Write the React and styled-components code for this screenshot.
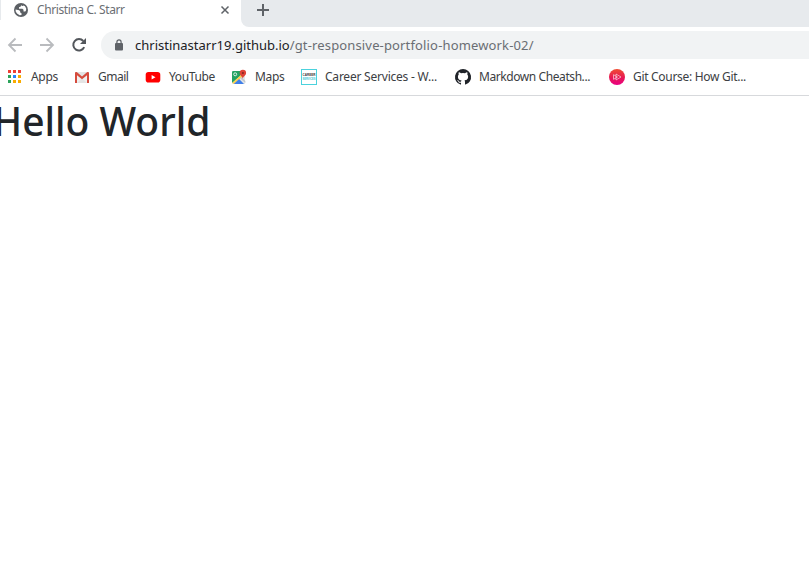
import React from "react";
import styled, { createGlobalStyle } from "styled-components";

const GlobalStyle = createGlobalStyle`
  * { box-sizing: border-box; }
  body { margin: 0; background: #fff; overflow: hidden; font-family: "Noto Sans", "Open Sans", sans-serif; }
  svg { display: block; flex: none; overflow: visible; }
`;
const Browser = styled.div`
  height: 571px;
  background: #fff;
  overflow: hidden;
`;
const TabStrip = styled.header`
  display: flex;
  height: 27px;
  background: #fff;
`;
const Tab = styled.div`
  display: flex;
  align-items: center;
  width: 241px;
  height: 20px;
  padding-left: 13px;
  border-left: 1px solid #e7eaed;
`;
const TabTitle = styled.span`
  width: 184px;
  margin-left: 9px;
  font-size: 12px;
  line-height: 20px;
  letter-spacing: ${(p) => p.$spacing}px;
  color: #6b6f74;
  white-space: nowrap;
`;
const StripRest = styled.div`
  flex: 1;
  padding: 4px 0 0 16px;
  background: #e7eaed;
  border-bottom-left-radius: 8px;
`;
const Toolbar = styled.nav`
  display: flex;
  align-items: center;
  height: 36px;
  padding-left: 7px;
`;
const NavIcon = styled.span`
  width: ${(p) => p.$width}px;
`;
const AddressBar = styled.div`
  display: flex;
  align-items: center;
  flex: 1;
  height: 28px;
  padding-left: 14px;
  background: #f1f3f4;
  border-radius: 14px 0 0 14px;
`;
const Url = styled.span`
  margin-left: 12px;
  font-size: 13px;
  line-height: 28px;
  color: #6a6e73;
  white-space: nowrap;
`;
const Host = styled.span`
  color: #202124;
`;
const Path = styled.span`
  letter-spacing: 0.15px;
`;
const Bookmarks = styled.nav`
  display: flex;
  align-items: center;
  height: 33px;
  padding: 0 0 5px 7px;
  border-bottom: 1px solid #d7d9dc;
`;
const Bookmark = styled.span`
  display: flex;
  align-items: center;
  flex: none;
  width: ${(p) => p.$width}px;
  gap: 8px;
`;
const Label = styled.span`
  font-size: 12px;
  line-height: 18px;
  letter-spacing: ${(p) => p.$spacing}px;
  color: #3c4043;
  white-space: nowrap;
`;
const Heading = styled.h1`
  margin: 1px 0 0 -7px;
  font-size: 39px;
  font-weight: 500;
  line-height: 48px;
  letter-spacing: -0.02px;
  color: #212529;
  white-space: nowrap;
`;

const Globe = () => (
  <svg width="14" height="14" viewBox="0 0 14 14">
    <circle cx="7" cy="7" r="7" fill="#5b5f64" />
    <path d="M7.2 1.7 6.8 3.5 5 4.2v1.5h3.4l1.1 1v1.7h1.8l.8-1.2.1-1.8-1.2-2.1-1.4-.9-.8.7-1.3-.3zM1.6 6.5 5.2 7.2l1 1.2v1.1l1.3.7v1.7l-1.8.3L3 10.5 1.7 8.6z" fill="#fff" />
  </svg>
);
const Stroke = ({ size, width = 1.7, color = "#5f6368", d }) => (
  <svg width={size} height={size} viewBox={`0 0 ${size} ${size}`} fill="none" stroke={color} strokeWidth={width}><path d={d} /></svg>
);
const Reload = () => (
  <svg width="16" height="16" viewBox="0 0 16 16">
    <path d="M13.2 10.1A5.7 5.7 0 1 1 12.3 4" fill="none" stroke="#53575c" strokeWidth="2" />
    <path d="M15 1v6H9z" fill="#53575c" />
  </svg>
);
const Lock = () => (
  <svg width="8" height="12" viewBox="0 0 8 12">
    <rect y="4" width="8" height="7.5" rx="1" fill="#5f6368" />
    <path d="M1.9 4.5V3a2.1 2.1 0 0 1 4.2 0v1.5" fill="none" stroke="#5f6368" strokeWidth="1.2" />
  </svg>
);
const AppsIcon = () => (
  <svg width="16" height="16" viewBox="0 0 16 16">
    <path d="M1 1h3v3H1zM6 1h3v3H6zM11 1h3v3h-3z" fill="#ee4035" />
    <path d="M1 6h3v3H1zM1 11h3v3H1z" fill="#2ba35a" />
    <path d="M6 6h3v3H6z" fill="#2684fc" />
    <path d="M11 6h3v3h-3zM6 11h3v3H6zM11 11h3v3h-3z" fill="#f9ab00" />
  </svg>
);
const Gmail = () => (
  <svg width="16" height="16" viewBox="0 0 16 16">
    <path d="M1.5 3h13v11h-13z" fill="#e4e4e4" />
    <path d="m3 4 5 4.2L13 4v10L8 9.2 3 14z" fill="#f0f0f0" />
    <path d="M1 14V4.2C1 3 2.1 2.6 3 3.3L8 7.4l5-4.1c.9-.7 2-.3 2 .9V14h-2V6.2L8 10.3 3 6.2V14z" fill="#d54b3d" />
  </svg>
);
const YouTube = () => (
  <svg width="16" height="16" viewBox="0 0 16 16">
    <rect x=".7" y="3" width="14.6" height="10.5" rx="2.8" fill="#f00" />
    <path d="M6.6 5.9v4.6l3.9-2.3z" fill="#fff" />
  </svg>
);
const Maps = () => (
  <svg width="16" height="16" viewBox="0 0 16 16">
    <path d="M2.3 2H14v13H2.3Q1 15 1 13.7V3.3Q1 2 2.3 2z" fill="#e4e6e7" />
    <path d="M2.3 2H10L9.5 6.7 1 14V3.3Q1 2 2.3 2z" fill="#23a262" />
    <path d="M1.2 14 11 5.1l1.4 1.4L3 15z" fill="#ffd04b" />
    <path d="m2.8 15 5.3-5L13 15z" fill="#3f7fe8" />
    <path d="m9.2 9.2 1.2-1.1 4 4V14z" fill="#c3c8cc" />
    <circle cx="4.2" cy="5.3" r="1.5" fill="none" stroke="#fff" strokeWidth=".8" />
    <path d="M11.8 9.8C11.6 7.5 8.7 6.5 8.7 4a3.2 3.2 0 0 1 6.4 0c0 2.5-3 3.5-3.3 5.8z" fill="#df4337" />
    <circle cx="11.9" cy="4" r="1.1" fill="#8a2823" />
  </svg>
);
const LogoText = styled.text`
  font: 700 4px "Liberation Sans", sans-serif;
`;
const Career = () => (
  <svg width="16" height="16" viewBox="0 0 16 16">
    <rect x=".5" y=".5" width="15" height="15" fill="#fff" stroke="#4bd2dd" />
    <LogoText x="1.6" y="7" textLength="12.8" lengthAdjust="spacingAndGlyphs" fill="#333">CAREER</LogoText>
    <LogoText x="1.6" y="10.8" textLength="12.8" lengthAdjust="spacingAndGlyphs" fill="#37c5d2">SERVICES</LogoText>
  </svg>
);
const Github = () => (
  <svg width="16" height="16" viewBox="0 0 16 16" fill="#202329">
    <path d="M8 0a8 8 0 0 0-2.53 15.59c.4.07.55-.17.55-.38v-1.49c-2.23.48-2.69-.94-2.69-.94-.36-.92-.89-1.17-.89-1.17-.73-.5.05-.49.05-.49.81.06 1.23.83 1.23.83.71 1.23 1.87.87 2.33.67.07-.52.28-.87.51-1.07-1.78-.2-3.64-.89-3.64-3.95 0-.87.31-1.59.82-2.15-.08-.2-.36-1.02.08-2.12 0 0 .67-.21 2.2.82a7.6 7.6 0 0 1 4 0c1.53-1.04 2.2-.82 2.2-.82.44 1.1.16 1.92.08 2.12.51.56.82 1.27.82 2.15 0 3.07-1.87 3.75-3.65 3.95.29.25.54.73.54 1.48v2.19c0 .21.15.46.55.38A8 8 0 0 0 8 0z" />
  </svg>
);
const Course = () => (
  <svg width="16" height="16" viewBox="0 0 16 16">
    <defs><linearGradient id="course" x1="0" y1="0" x2="0" y2="1"><stop stopColor="#f04d32" /><stop offset=".55" stopColor="#e71754" /><stop offset="1" stopColor="#e90084" /></linearGradient></defs>
    <circle cx="8" cy="8" r="8" fill="url(#course)" />
    <path d="M7 5v6l5-3zM4.500 5.700v4.600l4-2.300z" fill="none" stroke="#fff" strokeOpacity=".7" strokeWidth=".8" />
  </svg>
);

const bookmarks = [
  { label: "Apps", Icon: AppsIcon, width: 67, spacing: -0.3 },
  { label: "Gmail", Icon: Gmail, width: 71, spacing: -0.5 },
  { label: "YouTube", Icon: YouTube, width: 86, spacing: -0.38 },
  { label: "Maps", Icon: Maps, width: 70, spacing: -0.35 },
  { label: "Career Services - W...", Icon: Career, width: 154, spacing: -0.22 },
  { label: "Markdown Cheatsh...", Icon: Github, width: 154, spacing: -0.42 },
  { label: "Git Course: How Git...", Icon: Course, width: 150, spacing: -0.3 },
];

export default function App() {
  return (
    <Browser>
      <GlobalStyle />
      <TabStrip>
        <Tab>
          <Globe />
          <TabTitle $spacing={-0.41}>Christina C. Starr</TabTitle>
          <Stroke size={8} width={1.5} d="M.5.5l7 7m0-7-7 7" />
        </Tab>
        <StripRest><Stroke size={12} width={2} d="M6 0v12M0 6h12" /></StripRest>
      </TabStrip>
      <Toolbar>
        <NavIcon $width={32}><Stroke size={16} color="#b9bbbe" width={1.8} d="M15 8H2m6.5-6.5L2 8l6.5 6.5" /></NavIcon>
        <NavIcon $width={32}><Stroke size={16} color="#b9bbbe" width={1.8} d="M1 8h13M7.5 1.5 14 8l-6.500 6.500" /></NavIcon>
        <NavIcon $width={30}><Reload /></NavIcon>
        <AddressBar>
          <Lock />
          <Url><Host>christinastarr19.github.io</Host><Path>/gt-responsive-portfolio-homework-02/</Path></Url>
        </AddressBar>
      </Toolbar>
      <Bookmarks>
        {bookmarks.map(({ label, Icon, width, spacing }) => (
          <Bookmark key={label} $width={width}><Icon /><Label $spacing={spacing}>{label}</Label></Bookmark>
        ))}
      </Bookmarks>
      <Heading>Hello World</Heading>
    </Browser>
  );
}
